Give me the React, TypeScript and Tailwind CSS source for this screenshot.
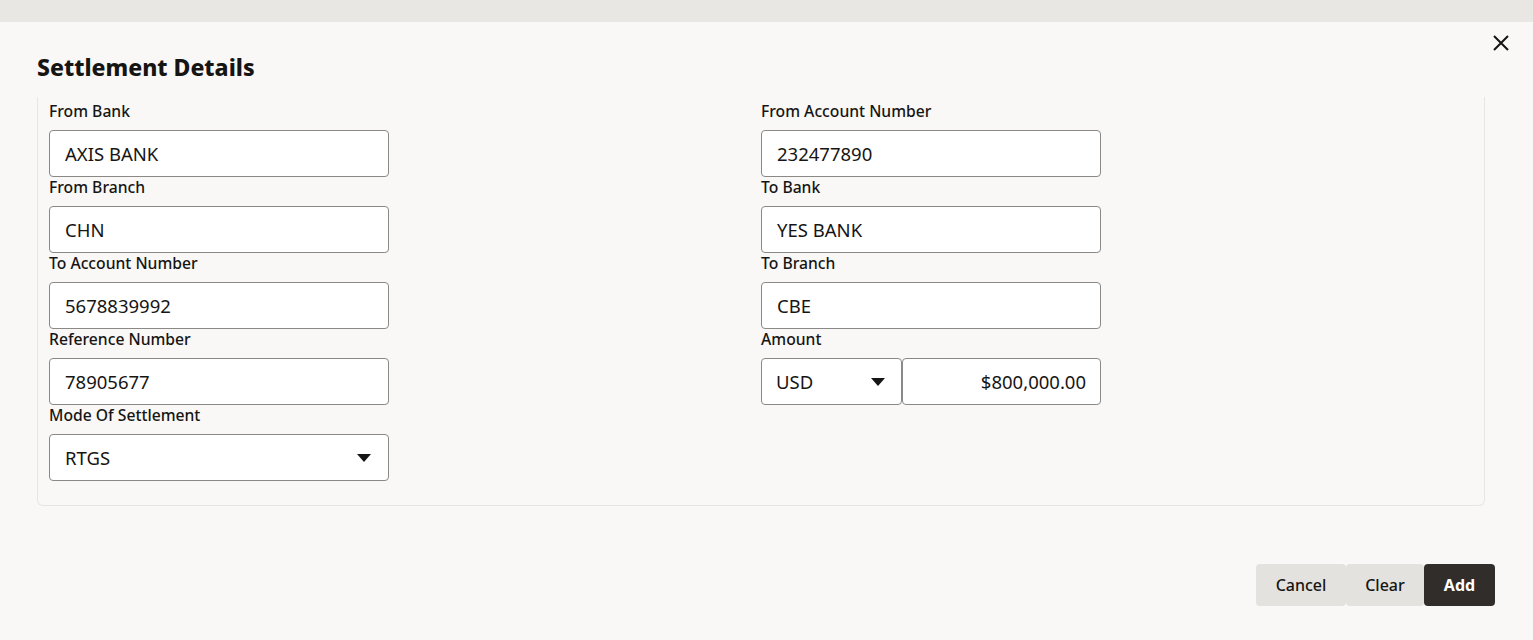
import React from "react";

function Field({ label, value, select }: { label: string; value: string; select?: boolean }) {
	return (
		<div className="flex flex-col">
			<label className="text-[15.7px] font-medium text-[#161513] leading-[19px] pt-[1px] pb-[9px]">{label}</label>
			<div className="w-[340px] h-[47px] bg-white border border-[#8b8986] rounded-[4px] flex items-center justify-between px-[15px] text-[18.5px] text-[#161513]">
				<span>{value}</span>
				{select && <Caret />}
			</div>
		</div>
	);
}

function Caret() {
	return (
		<svg width="14" height="8" viewBox="0 0 14 8" className="mr-[2px]">
			<path d="M0 0h14L7 8z" fill="#161513" />
		</svg>
	);
}

export default function App() {
	return (
		<div className="w-[1533px] h-[640px] bg-[#f9f8f6] flex flex-col" style={{ fontFamily: '"Noto Sans", "Open Sans", sans-serif' }}>
			<div className="h-[22px] bg-[#e9e7e4]" />
			<div className="flex-1 flex flex-col relative">
				<button className="absolute right-[23px] top-[12px] text-[#161513]">
					<svg width="18" height="18" viewBox="0 0 18 18">
						<path d="M2 2L16 16M16 2L2 16" stroke="#161513" strokeWidth="2" />
					</svg>
				</button>
				<h2 className="text-[23px] font-extrabold text-[#161513] pl-[37px] pt-[30px] leading-[30px]">Settlement Details</h2>
				<div className="mx-[37px] w-[1448px] mt-[15px] h-[409px] border border-t-0 border-[#e8e6e3] rounded-b-[6px] px-[11px] pt-[4px]">
					<div className="grid grid-cols-2">
						<Field label="From Bank" value="AXIS BANK" />
						<Field label="From Account Number" value="232477890" />
						<Field label="From Branch" value="CHN" />
						<Field label="To Bank" value="YES BANK" />
						<Field label="To Account Number" value="5678839992" />
						<Field label="To Branch" value="CBE" />
						<Field label="Reference Number" value="78905677" />
						<div className="flex flex-col">
							<label className="text-[15.7px] font-medium text-[#161513] leading-[19px] pt-[1px] pb-[9px]">Amount</label>
							<div className="flex">
								<div className="w-[141px] h-[47px] bg-white border border-[#8b8986] rounded-[4px] flex items-center justify-between px-[14px] text-[18.5px] text-[#161513]">
									<span>USD</span>
									<Caret />
								</div>
								<div className="w-[199px] h-[47px] bg-white border border-[#8b8986] rounded-[4px] flex items-center justify-end px-[14px] text-[18.5px] text-[#161513]">
									$800,000.00
								</div>
							</div>
						</div>
						<Field label="Mode Of Settlement" value="RTGS" select />
					</div>
				</div>
				<div className="flex justify-end pr-[38px] mt-[58px]">
					<button className="h-[42px] w-[90px] bg-[#e4e2df] rounded-[4px] text-[16px] font-medium text-[#161513]">Cancel</button>
					<button className="h-[42px] w-[78px] bg-[#e4e2df] rounded-[4px] text-[16px] font-medium text-[#161513]">Clear</button>
					<button className="h-[42px] w-[71px] bg-[#312d2a] rounded-[4px] text-[16px] font-bold text-white">Add</button>
				</div>
			</div>
		</div>
	);
}
